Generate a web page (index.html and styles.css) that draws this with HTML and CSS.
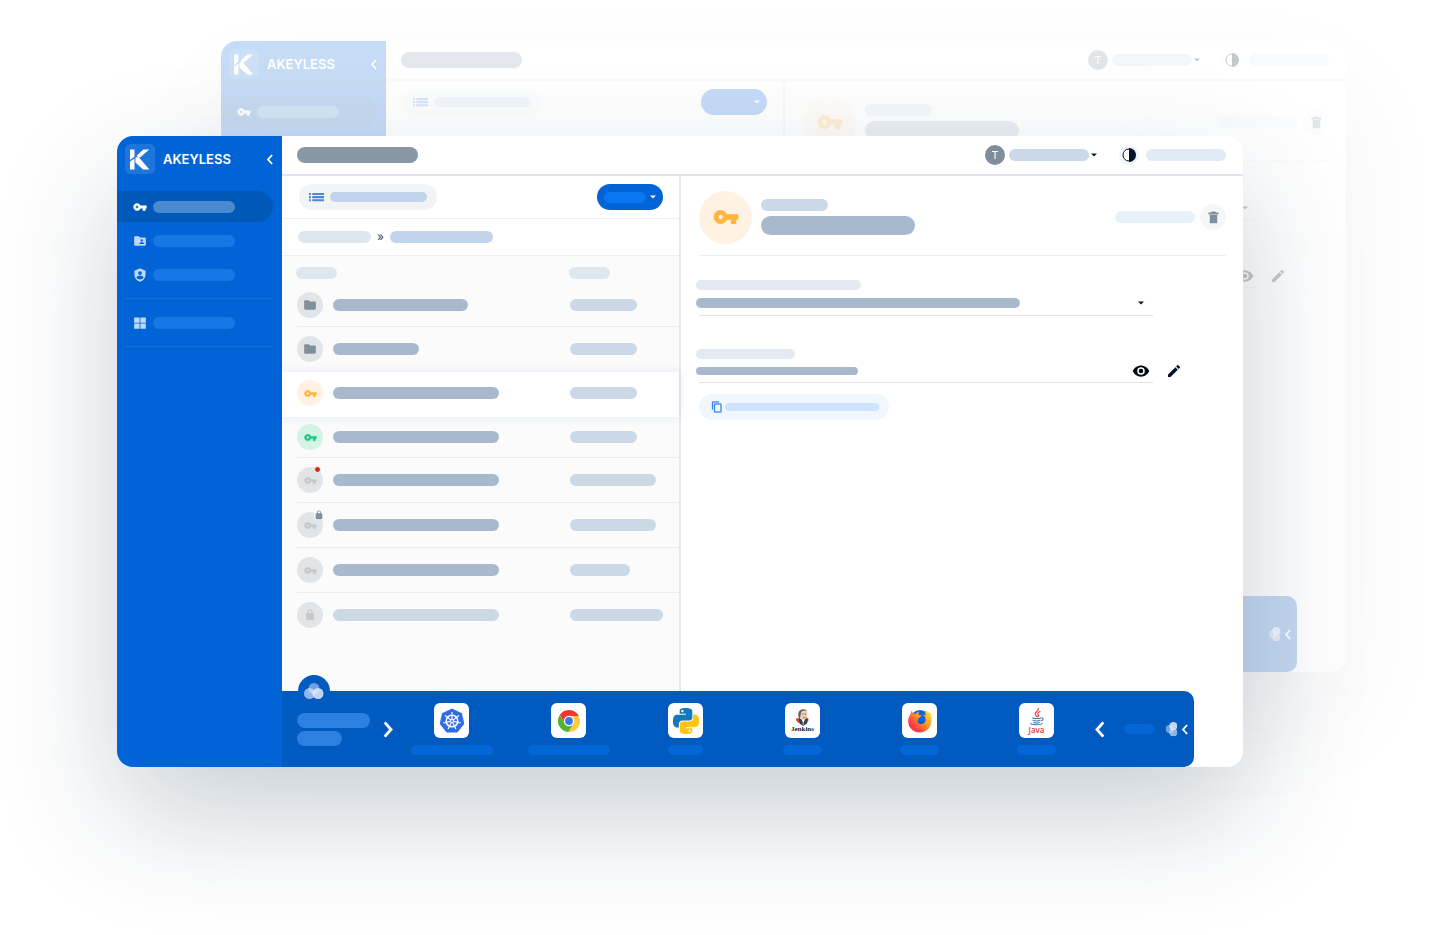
FILE: index.html
```html
<!DOCTYPE html>
<html lang="en">
<head>
<meta charset="utf-8">
<meta name="viewport" content="width=device-width, initial-scale=1">
<title>Akeyless console</title>
<link rel="stylesheet" href="styles.css">
<script src="script.js" defer></script>
</head>
<body>
<svg class="sprite" aria-hidden="true">
  <symbol id="logo" viewBox="0 0 30 30"><path d="M5 5.500h4.500v7.200L5 16zM5 17.600l4.500-3.200v11H5zM18.300 5.500h6L15 13.600l-3.400-1.900zM10.400 13.800l2.600-1.500 11.300 13.200h-6.200l-7.700-7z"/></symbol>
  <symbol id="key" viewBox="0 0 24 24"><path stroke="currentColor" stroke-width=".9" stroke-linejoin="round" d="M12.650 10C11.830 7.670 9.610 6 7 6c-3.310 0-6 2.690-6 6s2.690 6 6 6c2.610 0 4.830-1.670 5.650-4H17v4h4v-4h2v-4H12.650zM7 14.500a2.500 2.500 0 1 1 0-5 2.500 2.500 0 0 1 0 5z"/></symbol>
  <symbol id="folder" viewBox="0 0 24 24"><path d="M10 4H4c-1.100 0-2 .9-2 2v12c0 1.100.9 2 2 2h16c1.100 0 2-.9 2-2V8c0-1.100-.9-2-2-2h-8z"/></symbol>
  <symbol id="folder-user" viewBox="0 0 24 24"><path d="M20 6h-8l-2-2H4c-1.100 0-2 .9-2 2v12c0 1.100.9 2 2 2h16c1.100 0 2-.9 2-2V8c0-1.100-.9-2-2-2zm-5 3a2 2 0 1 1 0 4 2 2 0 0 1 0-4zm4 8h-8v-1c0-1.330 2.670-2 4-2s4 .67 4 2z"/></symbol>
  <symbol id="shield-user" viewBox="0 0 24 24"><path fill-rule="evenodd" d="M12 .5 2.500 4.500V11c0 5.600 4 10.900 9.500 12.500 5.500-1.600 9.500-6.900 9.500-12.500V4.500zM12 5.500a3.200 3.200 0 1 1 0 6.400 3.200 3.200 0 0 1 0-6.400zM6 16.500c0-2.400 3.500-3.800 6-3.800s6 1.400 6 3.800c-1.300 1.800-3.500 3-6 3s-4.700-1.200-6-3z"/></symbol>
  <symbol id="grid" viewBox="0 0 24 24"><path d="M2 2.500h9.300v9H2zM12.700 2.500H22v9h-9.300zM2 12.900h9.300v9H2zM12.700 12.900H22v9h-9.300z"/></symbol>
  <symbol id="list" viewBox="0 0 16 10"><path d="M0 .6h2v2.200H0zM3.500.6H16v2.200H3.500zM0 4h2v2.200H0zM3.500 4H16v2.200H3.500zM0 7.400h2v2.200H0zM3.500 7.400H16v2.200H3.500z"/></symbol>
  <symbol id="chevron" viewBox="0 0 10 18"><path d="M8.500 1.500 1.800 9l6.700 7.500" fill="none" stroke="currentColor" stroke-width="3"/></symbol>
  <symbol id="caret" viewBox="0 0 6 4"><path d="M0 .5h6L3 3.500z"/></symbol>
  <symbol id="contrast" viewBox="0 0 14 14"><circle cx="7" cy="7" r="6" fill="#fff" stroke="currentColor"/><path d="M7 0a7 7 0 0 1 0 14z"/></symbol>
  <symbol id="trash" viewBox="0 0 24 24"><path d="M6 21h12V8H6zM4 4h4l1-1.500h6L16 4h4v3H4z"/></symbol>
  <symbol id="lock" viewBox="0 0 24 24"><path d="M18 8h-1V6A5 5 0 0 0 7 6v2H6c-1.100 0-2 .9-2 2v10c0 1.100.9 2 2 2h12c1.100 0 2-.9 2-2V10c0-1.100-.9-2-2-2zM9 8V6a3 3 0 0 1 6 0v2z"/></symbol>
  <symbol id="eye" viewBox="0 0 24 24"><path d="M12 4.500C7 4.500 2.730 7.610 1 12c1.730 4.390 6 7.500 11 7.500s9.270-3.110 11-7.500c-1.730-4.390-6-7.500-11-7.500zM12 17a5 5 0 1 1 0-10 5 5 0 0 1 0 10zm0-8a3 3 0 1 0 0 6 3 3 0 0 0 0-6z"/></symbol>
  <symbol id="pencil" viewBox="0 0 24 24"><path d="M3 17.250V21h3.750L17.810 9.940l-3.750-3.750zM20.710 7.040a1 1 0 0 0 0-1.410l-2.340-2.340a1 1 0 0 0-1.410 0l-1.830 1.830 3.750 3.750z"/></symbol>
  <symbol id="copy" viewBox="0 0 24 24"><path d="M16 1H4C2.900 1 2 1.900 2 3v14h2V3h12zm3 4H8C6.900 5 6 5.900 6 7v14c0 1.100.9 2 2 2h11c1.100 0 2-.9 2-2V7c0-1.100-.9-2-2-2zm0 16H8V7h11z" stroke="currentColor" stroke-width=".6"/></symbol>
  <symbol id="venn" viewBox="0 0 20 16"><g fill="#dfeaff"><circle cx="10" cy="5.500" r="5.500" opacity=".5"/><circle cx="5.500" cy="10.500" r="5.500" opacity=".65"/><circle cx="14" cy="10.500" r="5.500" opacity=".85"/></g></symbol>
  <symbol id="kubernetes" viewBox="-13 -13 26 26">
    <path d="M0-11.200 8.900-7 11 2.600 4.900 10.200H-4.900L-11 2.600-8.900-7z" fill="#326ce5" stroke="#326ce5" stroke-width="2.400" stroke-linejoin="round"/>
    <g stroke="#fff" fill="none"><circle r="5.800" stroke-width="1.500"/><path stroke-width="1.200" d="M0-9V-1.500M7-5.600 1.200-1M8.800 2 1.500.4M3.900 8.100.7 1.500M-3.900 8.100-.7 1.500M-8.800 2-1.500.4M-7-5.600-1.200-1"/><circle r="1.500"/></g>
  </symbol>
  <symbol id="chrome" viewBox="-11 -11 22 22">
    <path fill="#f1382f" d="M-9.230-5.990A11 11 0 0 1 9.800-5H0L-4.330 2.500z"/>
    <path fill="#ffca3e" d="M9.800-5A11 11 0 0 1-.57 10.990L4.330 2.500 0-5z"/>
    <path fill="#56b32d" d="M-.57 10.990A11 11 0 0 1-9.230-5.990L-4.330 2.500 0 4 4.330 2.500z"/>
    <circle r="5.200" fill="#fff"/><circle r="3.900" fill="#3a76ee"/>
  </symbol>
  <symbol id="snake" viewBox="0 0 24 24"><path d="M14.250.18l.9.2.73.26.59.3.45.32.34.34.25.34.16.33.1.3.04.26.02.2-.01.13V8.500l-.05.63-.13.55-.21.46-.26.38-.3.31-.33.25-.35.19-.35.14-.33.1-.3.07-.26.04-.21.02H8.770l-.69.05-.59.14-.5.22-.41.27-.33.32-.27.35-.2.36-.15.37-.1.35-.07.32-.04.27-.02.21v3.060H3.170l-.21-.03-.28-.07-.32-.12-.35-.18-.36-.26-.36-.36-.35-.46-.32-.59-.28-.73-.21-.88-.14-1.050-.05-1.230.06-1.220.16-1.040.24-.87.32-.71.36-.57.4-.44.42-.33.42-.24.4-.16.36-.1.32-.05.24-.01h.16l.06.01h8.160v-.83H6.180l-.01-2.750-.02-.37.05-.34.11-.31.17-.28.25-.26.31-.23.38-.2.44-.18.51-.15.58-.12.64-.1.71-.06.77-.04.84-.02 1.270.05zm-6.300 1.980-.23.33-.08.41.08.41.23.34.33.22.41.09.41-.09.33-.22.23-.34.08-.41-.08-.41-.23-.33-.33-.22-.41-.09-.41.09z"/></symbol>
  <symbol id="python" viewBox="0 0 24 24"><use href="#snake" width="24" height="24" fill="#1579b8"/><use href="#snake" width="24" height="24" fill="#ffc414" transform="rotate(180 12 12)"/></symbol>
  <symbol id="jenkins" viewBox="0 0 14 17">
    <path d="M2 9c-2 0-2.500 2-1 3.500 1 1 2 1.500 4 2l3 0c3-.5 4.500-2 4.500-4 0-1-.8-2-2-2z" fill="#d1432f"/>
    <path d="M3 10h8.500L11 14.500 7 17l-3.500-2.500z" fill="#34404c"/>
    <path d="m5.500 10 1.800 4.500L9 10z" fill="#fff"/>
    <path d="M5.800 14.200h2.600L7.200 17z" fill="#89a0b5"/>
    <ellipse cx="7" cy="5.500" rx="4.500" ry="5.300" fill="#e9cdb9"/>
    <path d="M3 9C1 4 3.500 0 7.500.2c2 0 3 1 3.800 2-2-1-4-1.200-5.500.1C4.400 3.800 5 6 3.900 9z" fill="#675c58"/>
    <path d="M6.500 5h1M9 5h1" stroke="#4b4340" stroke-width=".9"/>
    <path d="M7 8.600c1 .4 1.700.3 2.500-.2" fill="none" stroke="#8d5244" stroke-width=".7"/>
  </symbol>
  <symbol id="firefox" viewBox="0 0 24 24">
    <linearGradient id="fox" x1="1" y1="0" x2="0" y2="1"><stop offset=".1" stop-color="#ffdf35"/><stop offset=".45" stop-color="#ff9327"/><stop offset=".75" stop-color="#ff3a42"/><stop offset="1" stop-color="#e4237b"/></linearGradient>
    <circle cx="12" cy="10.500" r="9.500" fill="#1262dd"/>
    <path fill="url(#fox)" d="M3.800 1.300c.3 1.900 1 2.900 2 3.500l2.300-.3c1-1.200 2-1.700 3.200-2-1 1.500-.9 2.600-.2 3.500l2.500.6c-.2 1.500-2.700 1.900-3.200 2.700.3 1.100-.5 2-1 2.700.9 2.200 2.900 3.100 4.900 2.700 3-.6 3.700-2.700 3.200-5.200-.5-2.300-2-3.300-3.300-3.800 1.500-.2 2.600.2 3.700 1-1.100-2.700-1-4.500-.3-6.200 1.300 2 2.900 2.500 4 4.200l.8-1.200c1.100 2.400 1.500 5.100 1.300 8-.4 6.700-5.300 12-11.800 12S.2 18.800.2 12.500c0-3 .8-5 2-7.200z"/>
    <path d="M9.300 12.500c2 2 5.400 1.300 6-1.600.7 3.800-3.700 5.500-6 1.600z" fill="#103f9d"/>
  </symbol>
  <symbol id="java" viewBox="0 0 14 18"><g fill="none" stroke-linecap="round"><path d="M8.200.6C9.200 2.700 4.700 4 5.200 6.200 5.500 7.200 6.500 8 7 8.800M10 3.500C7.500 4.500 7.300 5.800 8.300 6.900 8.800 7.500 8.500 8.200 8 8.700" stroke="#e6413f" stroke-width="1.200"/><path d="M3 9.900c-2 .7 5.500 1 7.700.1M3 12.300c1.500 1 5.500.9 7 0M3.800 14.500c1.500.7 4 .7 5.500 0M1.200 15.500c-1.800 1.200 9.500 2 11 0M11.200 10c2.500-.4 2.400 2.300.2 2.800" stroke="#3d7cc0" stroke-width="1.100"/></g></symbol>
</svg>

<div class="stage">
  <section class="window">
    <aside class="sidebar">
      <div class="brand">
        <span class="logo"><svg width="30" height="30"><use href="#logo"/></svg></span>
        <span class="brand-name">AKEYLESS</span>
        <button class="icon-btn" type="button" aria-label="Collapse menu"><svg width="6" height="11"><use href="#chevron"/></svg></button>
      </div>
      <nav class="nav" aria-label="Main">
        <a class="nav-item active" href="#" aria-label="Secrets"><svg width="14" height="14"><use href="#key"/></svg><i class="bar w82 nav-bar"></i></a>
        <a class="nav-item" href="#" aria-label="Roles"><svg width="14" height="14"><use href="#folder-user"/></svg><i class="bar w82 nav-bar"></i></a>
        <a class="nav-item" href="#" aria-label="Access"><svg width="14" height="14"><use href="#shield-user"/></svg><i class="bar w82 nav-bar"></i></a>
        <hr class="nav-rule">
        <a class="nav-item" href="#" aria-label="Apps"><svg width="14" height="14"><use href="#grid"/></svg><i class="bar w82 nav-bar"></i></a>
        <hr class="nav-rule">
      </nav>
    </aside>

    <div class="main">
      <header class="topbar">
        <i class="bar title-bar"></i>
        <div class="account">
          <span class="avatar">T</span>
          <button class="account-btn" type="button" aria-label="Account"><i class="bar w80 steel"></i><svg width="6" height="4"><use href="#caret"/></svg></button>
          <button class="theme-btn" type="button" aria-label="Theme"><svg width="14" height="14"><use href="#contrast"/></svg></button>
          <i class="bar w80 ice"></i>
        </div>
      </header>

      <div class="content">
        <section class="list-panel">
          <div class="toolbar">
            <button class="view-btn" type="button" aria-label="View"><svg width="15" height="10"><use href="#list"/></svg><i class="bar view-bar"></i></button>
            <button class="new-btn" type="button" aria-label="New"><i class="bar new-bar"></i><svg width="6" height="4"><use href="#caret"/></svg></button>
          </div>
          <div class="crumbs"><i class="bar w73 mist"></i><span class="crumb-sep">»</span><i class="bar w103 sky"></i></div>
          <div class="list-head"><i class="bar w41 mist"></i><i class="bar w41 mist"></i></div>
          <ul class="rows">
            <li class="row first"><span class="dot grey"><svg width="14" height="14"><use href="#folder"/></svg></span><i class="bar w135 slate"></i><i class="bar w67 steel"></i></li>
            <li class="row plain"><span class="dot grey"><svg width="14" height="14"><use href="#folder"/></svg></span><i class="bar w86 slate"></i><i class="bar w67 steel"></i></li>
            <li class="row selected"><span class="dot amber"><svg width="13" height="13"><use href="#key"/></svg></span><i class="bar w166 slate"></i><i class="bar w67 steel"></i></li>
            <li class="row tight"><span class="dot green"><svg width="13" height="13"><use href="#key"/></svg></span><i class="bar w166 slate"></i><i class="bar w67 steel"></i></li>
            <li class="row"><span class="dot faint"><svg width="13" height="13"><use href="#key"/></svg><b class="alert"></b></span><i class="bar w166 slate"></i><i class="bar w86 steel"></i></li>
            <li class="row"><span class="dot faint"><svg width="13" height="13"><use href="#key"/></svg><b class="locked"><svg width="10" height="10"><use href="#lock"/></svg></b></span><i class="bar w166 slate"></i><i class="bar w86 steel"></i></li>
            <li class="row"><span class="dot faint"><svg width="13" height="13"><use href="#key"/></svg></span><i class="bar w166 slate"></i><i class="bar w60 steel"></i></li>
            <li class="row plain"><span class="dot faint"><svg width="12" height="12"><use href="#lock"/></svg></span><i class="bar w166 pale"></i><i class="bar w93 steel"></i></li>
          </ul>
        </section>

        <section class="detail">
          <div class="detail-head">
            <span class="item-icon"><svg width="26" height="26"><use href="#key"/></svg></span>
            <div class="item-name"><i class="bar w67 steel"></i><i class="bar name-bar"></i></div>
            <i class="bar w80 frost"></i>
            <button class="trash-btn" type="button" aria-label="Delete"><svg width="15" height="15"><use href="#trash"/></svg></button>
          </div>
          <div class="field">
            <i class="bar slim w165 cloud"></i>
            <button class="value" type="button" aria-label="Key"><i class="bar slim w324 slate"></i><svg class="value-caret" width="6" height="4"><use href="#caret"/></svg></button>
          </div>
          <div class="field second">
            <i class="bar slim w99 cloud"></i>
            <div class="value"><i class="bar slim w162 slate"></i>
              <button class="icon-btn eye" type="button" aria-label="Show"><svg width="18" height="18"><use href="#eye"/></svg></button>
              <button class="icon-btn edit" type="button" aria-label="Edit"><svg width="16" height="16"><use href="#pencil"/></svg></button>
            </div>
          </div>
          <button class="copy-btn" type="button" aria-label="Copy"><svg width="12" height="12"><use href="#copy"/></svg><i class="bar copy-bar"></i></button>
        </section>
      </div>

      <footer class="dock">
        <span class="dock-badge"><svg width="20" height="16"><use href="#venn"/></svg></span>
        <div class="dock-title"><i class="bar tall w73"></i><i class="bar tall w45"></i></div>
        <button class="icon-btn" type="button" aria-label="Next"><svg class="flip" width="10" height="17"><use href="#chevron"/></svg></button>
        <div class="apps">
          <div class="app"><span class="tile"><svg width="26" height="26"><use href="#kubernetes"/></svg></span><i class="bar slim w82"></i></div>
          <div class="app"><span class="tile"><svg width="22" height="22"><use href="#chrome"/></svg></span><i class="bar slim w82"></i></div>
          <div class="app"><span class="tile"><svg width="26" height="26"><use href="#python"/></svg></span><i class="bar slim w35"></i></div>
          <div class="app"><span class="tile"><svg width="14" height="17"><use href="#jenkins"/></svg><span class="jenkins-name">Jenkins</span></span><i class="bar slim w39"></i></div>
          <div class="app"><span class="tile"><svg width="24" height="24"><use href="#firefox"/></svg></span><i class="bar slim w39"></i></div>
          <div class="app"><span class="tile"><svg width="14" height="18"><use href="#java"/></svg><span class="java-name">Java</span></span><i class="bar slim w39"></i></div>
        </div>
        <button class="icon-btn" type="button" aria-label="Previous"><svg width="10" height="17"><use href="#chevron"/></svg></button>
        <i class="bar slim dock-link"></i>
        <button class="icon-btn dock-toggle" type="button" aria-label="Hide"><svg class="turned" width="15" height="12"><use href="#venn"/></svg><svg width="6" height="11"><use href="#chevron"/></svg></button>
      </footer>
    </div>
  </section>
</div>
</body>
</html>
```
FILE: styles.css
```css
* { box-sizing: border-box; }
body { margin: 0; background: #fff; font-family: Inter, "Open Sans", sans-serif; overflow-x: hidden; }
button { border: 0; padding: 0; background: none; color: inherit; font: inherit; display: flex; align-items: center; }
svg { display: block; flex: none; fill: currentColor; }
.sprite { position: absolute; width: 0; height: 0; }

.stage { display: grid; align-items: start; padding-bottom: 168px; }
.window {
  grid-area: 1 / 1; display: grid; grid-template-columns: 165px minmax(0, 1fr);
  position: relative; z-index: 1;
  margin: 136px 197px 0 117px; border-radius: 16px; background: #fff;
  box-shadow: 0 48px 120px rgba(14, 44, 72, .22);
}
.window.ghost { z-index: 0; margin: 41px 94px 0 221px; opacity: .23; }

/* Placeholder bars */
.bar { display: block; flex: none; height: 12px; border-radius: 8px; }
.slim { height: 10px; }
.tall { height: 15px; }
.w35 { width: 35px; } .w39 { width: 39px; } .w41 { width: 41px; } .w45 { width: 45px; }
.w60 { width: 60px; } .w67 { width: 67px; } .w73 { width: 73px; } .w80 { width: 80px; }
.w82 { width: 82px; } .w86 { width: 86px; } .w93 { width: 93px; } .w99 { width: 99px; }
.w103 { width: 103px; } .w135 { width: 135px; } .w162 { width: 162px; } .w165 { width: 165px; }
.w166 { width: 166px; } .w324 { width: 324px; }
.slate { background: #a9b9cd; }
.steel { background: #cbd9e7; }
.pale { background: #ced9e6; }
.mist { background: #dee6ef; }
.sky { background: #c2d4eb; }
.ice { background: #e1ebf6; }
.frost { background: #e8f0f9; }
.cloud { background: #e5eaf2; }

/* Sidebar */
.sidebar { background: #0063d6; border-radius: 16px 0 0 16px; }
.brand { display: flex; align-items: center; gap: 8px; height: 46px; padding: 0 9px 0 8px; color: #fff; }
.logo { border-radius: 5px; background: #1e75dc; }
.brand-name { flex: 1; font-size: 13px; line-height: 16px; font-weight: 600; }
.nav { display: flex; flex-direction: column; gap: 3px; padding: 9px 9px 0 0; }
.nav-item { display: flex; align-items: center; gap: 6px; height: 31px; padding-left: 16px; color: #bfd8f5; }
.nav-item.active { background: #0058b9; border-radius: 0 16px 16px 0; color: #fff; }
.nav-bar { background: #1777e5; }
.active .nav-bar { background: #4a8ad0; }
.nav-rule { width: auto; height: 1px; margin: 5px 0 5px 8px; border: 0; background: #1670dc; }

/* Top bar */
.main { display: flex; flex-direction: column; min-width: 0; }
.topbar { display: flex; align-items: center; justify-content: space-between; height: 40px; padding: 0 17px 0 15px; border-bottom: 2px solid #e1e4ea; }
.title-bar { width: 121px; height: 16px; background: #8896a5; }
.account { display: flex; align-items: center; gap: 4px; color: #04142f; }
.avatar { width: 20px; border-radius: 50%; background: #808d9b; color: #fff; font-size: 11px; line-height: 20px; text-align: center; }
.account-btn { gap: 2px; }
.theme-btn { justify-content: center; width: 20px; height: 20px; margin: 0 3px 0 18px; border-radius: 50%; background: #f2f3f5; }

/* List */
.content { flex: 1; display: grid; grid-template-columns: 399px minmax(0, 1fr); }
.list-panel { display: flex; flex-direction: column; padding-bottom: 53px; border-right: 2px solid #e4e7ec; background: #fbfbfb; }
.toolbar { display: flex; align-items: center; justify-content: space-between; height: 43px; padding: 0 16px 0 17px; border-bottom: 1px solid #edeff1; background: #fff; }
.view-btn { gap: 6px; width: 138px; height: 26px; padding-left: 10px; border-radius: 13px; background: #f2f3f5; color: #4b87df; }
.view-bar { width: 97px; height: 10px; background: #c2d4eb; }
.new-btn { gap: 4px; width: 66px; height: 26px; padding-left: 7px; border-radius: 13px; background: #0063d6; color: #fff; }
.new-bar { width: 42px; height: 11px; background: #0977f2; }
.ghost .new-bar, .ghost .dock-link { background: none; }
.crumbs { display: flex; align-items: center; height: 37px; padding-left: 16px; border-bottom: 1px solid #edeff1; background: #fff; }
.crumb-sep { width: 19px; color: #3c4759; font-size: 12px; line-height: 12px; text-align: center; }
.list-head { display: grid; grid-template-columns: minmax(0, 1fr) 110px; height: 27px; padding-left: 14px; align-items: center; padding-top: 6px; }
.rows { margin: 0; padding: 0; list-style: none; }
.row { display: grid; grid-template-columns: 26px minmax(0, 1fr) 109px; column-gap: 10px; align-items: center; height: 45px; margin-left: 15px; border-bottom: 1px solid #eaecee; }
.row.first { height: 44px; }
.row.plain { border-color: transparent; }
.row.tight { height: 41px; }
.row.selected { margin-left: 0; padding: 0 0 3px 15px; border: 0; background: #fff; box-shadow: 0 0 9px rgba(40, 90, 190, .12); }
.dot { position: relative; display: flex; align-items: center; justify-content: center; width: 26px; height: 26px; border-radius: 50%; }
.grey { background: #e2e5e8; color: #818e9c; }
.faint { background: #e2e5e8; color: #c4c9cd; }
.amber { background: #fff2e2; color: #ffb43b; }
.green { background: #d5f3e5; color: #1dc97c; }
.alert { position: absolute; top: -1px; right: 2px; width: 7px; height: 7px; border: 1px solid #fbfbfb; border-radius: 50%; background: #d1300f; }
.locked { position: absolute; top: -2px; right: -1px; background: #fbfbfb; border-radius: 3px; color: #818e9c; }

/* Detail */
.detail { padding: 0 17px 0 18px; }
.detail-head { display: flex; align-items: center; height: 80px; border-bottom: 1px solid #eceef0; padding-top: 3px; }
.item-icon { display: flex; align-items: center; justify-content: center; width: 53px; height: 53px; border-radius: 50%; background: #fff2e2; color: #ffb43b; }
.item-name { flex: 1; display: flex; flex-direction: column; gap: 5px; padding-left: 9px; }
.name-bar { width: 154px; height: 19px; border-radius: 10px; background: #a9b9cd; }
.trash-btn { justify-content: center; width: 26px; height: 26px; margin-left: 5px; border-radius: 50%; background: #f5f7f7; color: #818e9c; }
.field { width: 454px; max-width: 100%; padding-top: 24px; }
.field.second { padding-top: 33px; }
.field .bar { margin-left: -3px; }
.value { position: relative; justify-content: space-between; display: flex; align-items: center; width: 100%; height: 26px; border-bottom: 1px solid #dfe1e3; }
.second .value { height: 24px; }
.second .value .bar { height: 8px; }
.value-caret { margin-right: 9px; color: #04142f; }
.icon-btn { cursor: pointer; }
.eye { margin-right: 3px; color: #050b16; }
.edit { position: absolute; left: 100%; margin-left: 13px; color: #04142f; }
.copy-btn { gap: 2px; width: 190px; height: 26px; margin-top: 11px; padding-left: 12px; border-radius: 13px; background: #f1f7ff; color: #3c82e8; }
.copy-bar { width: 154px; height: 8px; background: #cde3ff; }

/* Dock */
.dock { position: relative; display: flex; align-items: center; height: 76px; margin-right: 49px; padding: 0 6px 0 15px; border-radius: 0 10px 10px 0; background: #005abf; color: #fff; }
.dock-badge { position: absolute; top: -16px; left: 16px; display: flex; align-items: center; justify-content: center; width: 32px; height: 32px; border-radius: 50%; background: #005abf; }
.dock-title { display: flex; flex-direction: column; gap: 3px; width: 86px; }
.dock-title .bar { background: #2b80e2; }
.flip { transform: scaleX(-1); }
.apps { flex: 1; display: grid; grid-template-columns: repeat(6, minmax(0, 1fr)); }
.app { display: flex; flex-direction: column; align-items: center; gap: 7px; }
.app .bar, .dock-link { background: #0467d8; }
.tile { display: flex; flex-direction: column; align-items: center; justify-content: center; width: 35px; height: 35px; border-radius: 6px; background: #fff; }
.jenkins-name { color: #222; font: bold 7px/7px "Liberation Serif", serif; }
.java-name { color: #e03c3c; font: 600 8px/8px "Open Sans", sans-serif; }
.dock-link { width: 31px; margin-left: 19px; }
.dock-toggle { gap: 3px; margin-left: 9px; }
.turned { transform: rotate(-90deg); }
```
FILE: script.js
```js
// Stacks a faded copy of the window behind the main one.
const front = document.querySelector('.window');
const ghost = front.cloneNode(true);
ghost.classList.add('ghost');
ghost.inert = true;
front.before(ghost);
```
